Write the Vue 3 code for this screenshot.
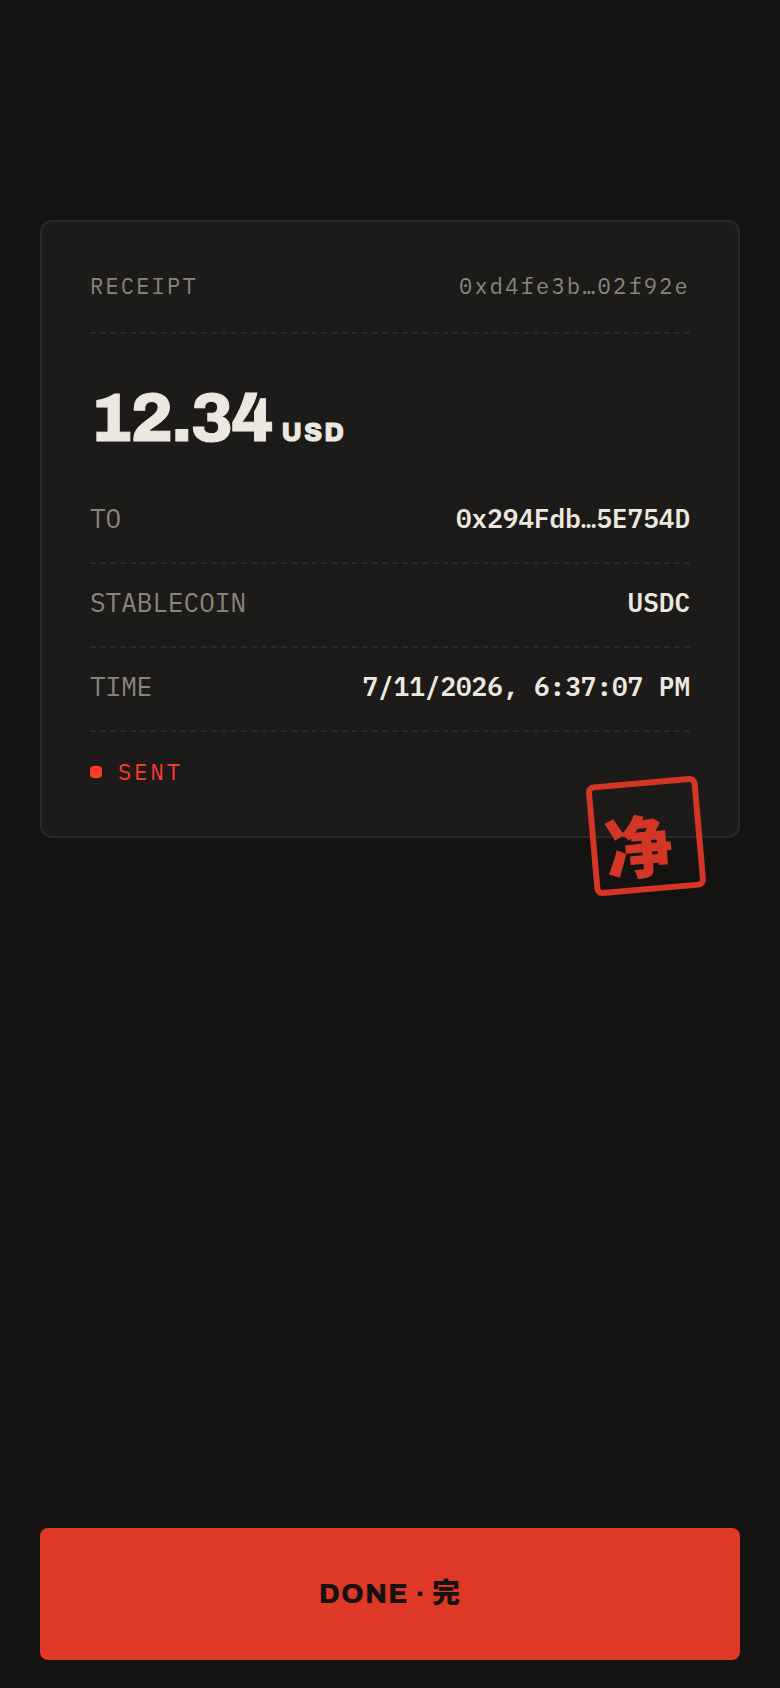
<script setup>
const amount = { value: '12.34', currency: 'USD' }
const hash = '0xd4fe3b…02f92e'
const rows = [
  { label: 'TO', value: '0x294Fdb…5E754D' },
  { label: 'STABLECOIN', value: 'USDC' },
  { label: 'TIME', value: '7/11/2026, 6:37:07 PM' },
]
</script>

<template>
  <main class="screen">
    <section class="receipt" aria-label="Receipt">
      <header class="head">
        <span>RECEIPT</span>
        <span>{{ hash }}</span>
      </header>
      <p class="amount">
        <span class="value">{{ amount.value }}</span>
        <span class="currency">{{ amount.currency }}</span>
      </p>
      <dl class="rows">
        <div v-for="row in rows" :key="row.label" class="row">
          <dt>{{ row.label }}</dt>
          <dd>{{ row.value }}</dd>
        </div>
      </dl>
      <p class="status"><span class="dot"></span>SENT</p>
      <div class="stamp" lang="zh-Hans">净</div>
    </section>
    <button class="done" type="button">DONE · 完</button>
  </main>
</template>

<style>
body {
  margin: 0;
  background: #141311;
}
</style>

<style scoped>
.screen {
  box-sizing: border-box;
  min-height: 100vh;
  display: flex;
  flex-direction: column;
  padding: 220px 40px 28px;
  background: #141311;
  color: #ede8df;
  font-family: "IBM Plex Mono", "Liberation Mono", monospace;
}

.receipt {
  position: relative;
  padding: 48px;
  border: 2px solid #2a2927;
  border-radius: 12px;
  background: #1c1b19;
}

.head {
  display: flex;
  justify-content: space-between;
  padding-bottom: 30px;
  border-bottom: 2px dashed #2a2927;
  color: #8a857b;
  font-size: 22px;
  line-height: 32px;
  letter-spacing: 0.1em;
}

.amount {
  display: flex;
  align-items: baseline;
  gap: 10px;
  margin: 0;
  padding: 44px 0 22px;
  font-family: Archivo, Inter, sans-serif;
  font-weight: 800;
  -webkit-text-stroke: 1px currentColor;
}

.value {
  font-size: 68px;
  line-height: 80px;
  letter-spacing: -0.03em;
}

.currency {
  font-size: 26px;
  line-height: 32px;
  letter-spacing: 0.08em;
}

.rows {
  margin: 0;
}

.row {
  display: flex;
  justify-content: space-between;
  padding: 18px 0 24px;
  border-bottom: 2px dashed #2a2927;
  font-size: 26px;
  line-height: 40px;
}

dt {
  color: #8a857b;
}

dd {
  margin: 0;
  font-weight: 600;
}

.status {
  display: flex;
  align-items: center;
  gap: 16px;
  margin: 24px 0 0;
  color: #ff3b2b;
  font-size: 22px;
  line-height: 32px;
  letter-spacing: 0.14em;
}

.dot {
  width: 12px;
  height: 12px;
  border-radius: 4px;
  background: #ff3b2b;
}

.stamp {
  position: absolute;
  right: 36px;
  bottom: -56px;
  box-sizing: border-box;
  width: 112px;
  height: 112px;
  display: flex;
  align-items: flex-end;
  padding: 0 0 9px 8px;
  border: 6px solid #d43625;
  border-radius: 8px;
  color: #d43625;
  font-family: "Noto Sans CJK SC", sans-serif;
  font-size: 68px;
  font-weight: 900;
  line-height: 68px;
  transform: rotate(-5deg);
}

.done {
  margin-top: auto;
  padding: 46px 24px;
  border: 0;
  border-radius: 8px;
  background: #df3826;
  color: #141311;
  font-family: Archivo, Inter, "Noto Sans CJK SC", sans-serif;
  font-size: 28px;
  font-weight: 800;
  line-height: 40px;
  letter-spacing: 0.04em;
}
</style>
